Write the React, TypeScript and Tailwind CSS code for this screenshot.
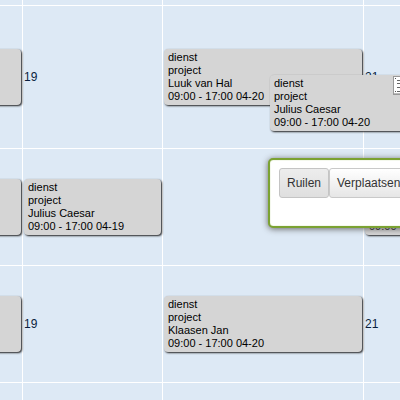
import React from 'react';

interface Shift {
  name?: string;
  time?: string;
}

const ShiftText: React.FC<Shift> = ({ name, time }) => (
  <>
    <p>dienst</p>
    <p>project</p>
    <p>{name}</p>
    <p>{time}</p>
  </>
);

const ShiftCard: React.FC<Shift> = ({ name, time }) => (
  <div className="mx-px h-14 whitespace-nowrap rounded-[4px] bg-[#d5d5d5] px-1 pt-0.5 text-[11px] leading-[13px] shadow-[1px_1px_2px_#222]">
    <ShiftText name={name} time={time} />
  </div>
);

// The tail end of a shift that started before the visible days
const EarlierShift: React.FC = () => (
  <div className="-ml-2 mr-px h-14 rounded-[4px] bg-[#d5d5d5] shadow-[1px_1px_2px_#222]" />
);

const Day: React.FC<{ children?: React.ReactNode }> = ({ children }) => (
  <td className="border-r border-b border-white p-0 align-middle">{children}</td>
);

const DayNumber: React.FC<{ value: number }> = ({ value }) => (
  <span className="block pl-px text-xs leading-4 text-[#0a1e3c]">{value}</span>
);

const NoteIcon: React.FC = () => (
  <svg width="16" height="19" viewBox="0 0 16 19" shapeRendering="crispEdges">
    <rect x="0.5" y="0.5" width="15" height="18" fill="#fff" stroke="#999" />
    <path d="M1 17.5h14" stroke="#bbb" />
    <path d="M2 2.5h1M2 15.5h1" stroke="#555" />
    <path d="M4 4.5h9M4 7.5h9M4 11.5h9M4 15.5h9" stroke="#666" />
  </svg>
);

const App: React.FC = () => {
  return (
    <main className="relative h-screen overflow-hidden bg-[#dde9f5] font-['Liberation_Sans',Arial,sans-serif] text-black">
      {/* Schedule */}
      <table className="w-full min-w-[504px] table-fixed border-separate border-spacing-0">
        <colgroup>
          <col className="w-[23px]" />
          <col className="w-[140px]" />
          <col className="w-[201px]" />
          <col />
        </colgroup>
        <tbody>
          <tr className="h-1.5">
            <Day />
            <Day />
            <Day />
            <Day />
          </tr>
          <tr className="h-[143px]">
            <Day><EarlierShift /></Day>
            <Day><DayNumber value={19} /></Day>
            <Day><ShiftCard name="Luuk van Hal" time="09:00 - 17:00 04-20" /></Day>
            <Day><DayNumber value={21} /></Day>
          </tr>
          <tr className="h-[117px]">
            <Day><EarlierShift /></Day>
            <Day><ShiftCard name="Julius Caesar" time="09:00 - 17:00 04-19" /></Day>
            <Day />
            <Day><ShiftCard name="Julius Caesar" time="09:00 - 17:00 04-21" /></Day>
          </tr>
          <tr className="h-[117px]">
            <Day><EarlierShift /></Day>
            <Day><DayNumber value={19} /></Day>
            <Day><ShiftCard name="Klaasen Jan" time="09:00 - 17:00 04-20" /></Day>
            <Day><DayNumber value={21} /></Day>
          </tr>
          <tr className="h-[117px]">
            <Day />
            <Day />
            <Day />
            <Day />
          </tr>
        </tbody>
      </table>

      {/* Shift being dragged */}
      <div className="absolute top-[75px] left-[270px] h-14 w-[139px] whitespace-nowrap rounded-[4px] bg-[#d5d5d5] px-1 pt-0.5 text-[11px] leading-[13px] shadow-[1px_1px_2px_#222]">
        <ShiftText name="Julius Caesar" time="09:00 - 17:00 04-20" />
        <button type="button" aria-label="Notitie" className="absolute top-px right-0">
          <NoteIcon />
        </button>
      </div>

      {/* Drop menu */}
      <div className="absolute top-[158px] left-[268px] flex h-[70px] w-[180px] items-start rounded-[5px] border-2 border-[#7ba232] bg-white px-[9px] pt-2 shadow-[0_1px_6px_#666,inset_0_0_1px_#8fb84a]">
        <button type="button" className="h-[30px] rounded-[3px] border border-[#c4c4c4] bg-linear-to-b from-[#ededed] to-[#dfdfdf] px-[7px] text-xs text-[#333]">
          Ruilen
        </button>
        <button type="button" className="h-[30px] rounded-[3px] border border-[#c9c9c9] bg-linear-to-b from-white to-[#e6e6e6] px-[7px] text-xs text-[#333]">
          Verplaatsen
        </button>
      </div>
    </main>
  );
};

export default App;
